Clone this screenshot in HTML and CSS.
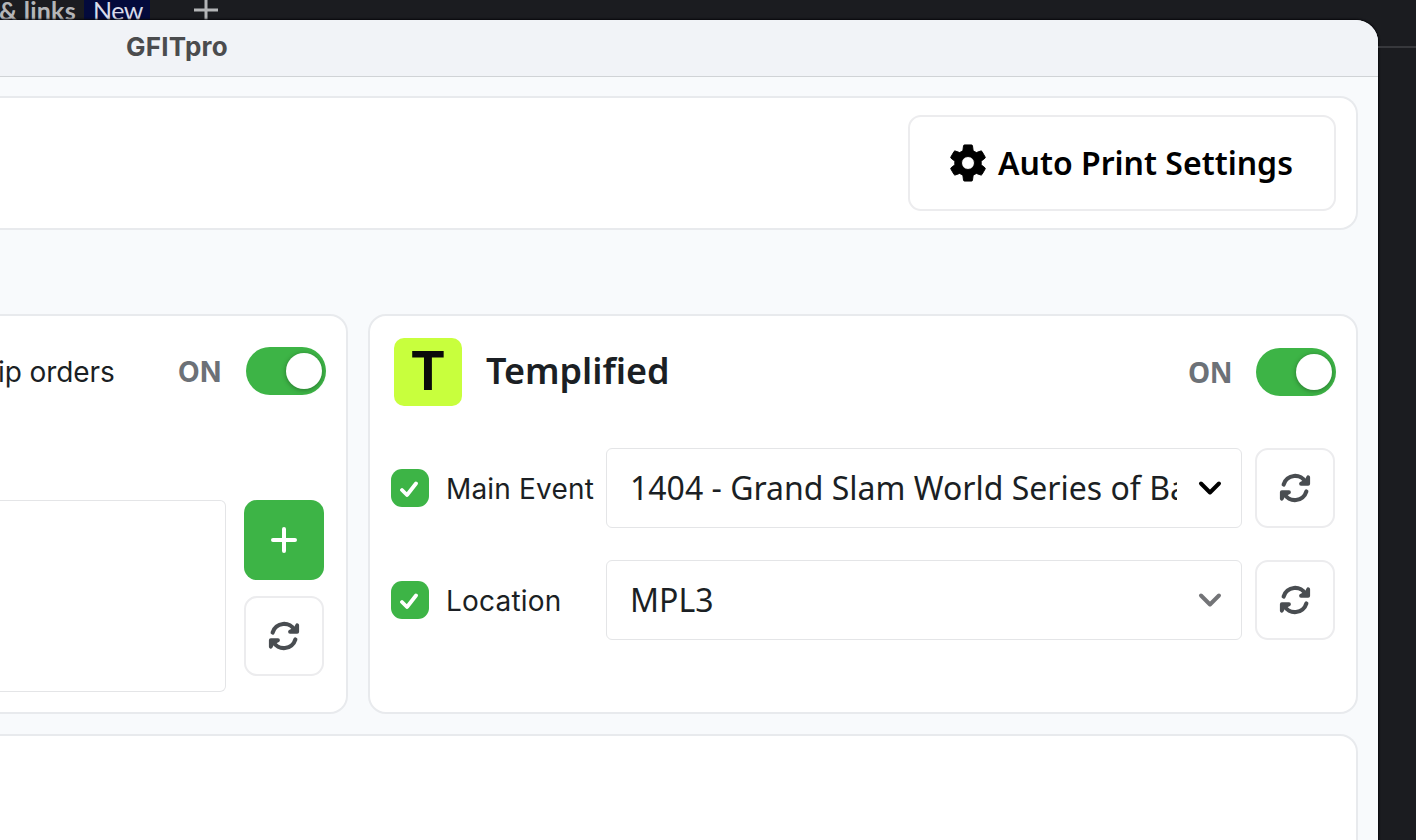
FILE: index.html
```html
<!DOCTYPE html>
<html lang="en">
<head>
<meta charset="utf-8">
<title>GFITpro</title>
<link rel="stylesheet" href="styles.css">
</head>
<body>
<svg class="defs" aria-hidden="true">
  <symbol id="refresh" viewBox="-16 -16 32 32">
    <g id="half">
      <path d="M-11.4 -3.4A12 12 0 0 1 10.8 -5.6" fill="none" stroke="currentColor" stroke-width="4.1" stroke-linecap="round"/>
      <path d="M13.2 -10.8V-4.2H6L11.4 -7Z" fill="currentColor" stroke="currentColor" stroke-width="3.8" stroke-linecap="round" stroke-linejoin="round"/>
    </g>
    <use href="#half" transform="rotate(180)"/>
  </symbol>
</svg>
<div class="tabs"><span class="tab-label">&amp; links</span><span class="tag">New</span>
  <svg class="tab-plus" viewBox="0 0 24 20"><path d="M0 10H24M12 0V20" stroke="#b4b5b7" stroke-width="3"/></svg>
</div>
<div class="desk">
  <main class="window">
    <header class="titlebar"><span>GFITpro</span></header>
    <section class="card toolbar">
      <button class="settings">
        <svg viewBox="2 2 20 20"><path fill-rule="evenodd" stroke="#000" stroke-width=".5" stroke-linejoin="round" d="M18.9 12.94c.04-.3.06-.61.06-.94 0-.32-.02-.64-.07-.94l2.03-1.58c.18-.14.23-.41.12-.61l-1.72-2.98c-.12-.22-.37-.29-.59-.22l-2.39.86c-.5-.38-1.03-.7-1.62-.94l-.36-2.7c-.04-.24-.24-.41-.48-.41h-3.76c-.24 0-.43.17-.47.41l-.36 2.7c-.59.24-1.13.57-1.62.94l-2.39-.86c-.22-.08-.47 0-.59.22L2.96 8.87c-.12.21-.08.47.12.61l2.03 1.58c-.05.3-.07.63-.07.94s.02.64.07.94l-2.03 1.58c-.18.14-.23.41-.12.61l1.73 2.98c.12.22.37.29.59.22l2.39-.86c.5.38 1.03.7 1.62.94l.36 2.7c.05.24.24.41.48.41h3.76c.24 0 .44-.17.47-.41l.36-2.7c.59-.24 1.13-.56 1.62-.94l2.39.86c.22.08.47 0 .59-.22l1.72-2.98c.12-.22.07-.47-.12-.61l-2.01-1.58zM12 15.4a3.4 3.4 0 1 1 0-6.8 3.4 3.4 0 0 1 0 6.8z"/></svg>
        <span>Auto Print Settings</span>
      </button>
    </section>
    <div class="columns">
      <section class="card orders">
        <div class="orders-head"><span class="label orders-label">ip orders</span><span class="on on-sans">ON</span><span class="switch"></span></div>
        <div class="orders-body">
          <div class="listbox"></div>
          <div class="actions">
            <button class="icon-btn add"><svg viewBox="0 0 26 26"><path d="M13 2V24M2 13H24" stroke="#fff" stroke-width="4" stroke-linecap="round"/></svg></button>
            <button class="icon-btn"><svg class="sync"><use href="#refresh"/></svg></button>
          </div>
        </div>
      </section>
      <section class="card event">
        <div class="event-head"><span class="logo">T</span><h2>Templified</h2><span class="on on-noto">ON</span><span class="switch"></span></div>
        <div class="field">
          <span class="check"><svg viewBox="0 0 18 16"><path d="M2 9L7 14L16 2.5" fill="none" stroke="#fff" stroke-width="3.8" stroke-linecap="round" stroke-linejoin="round"/></svg></span>
          <span class="label main-label">Main Event</span>
          <div class="select"><span class="value">1404 - Grand Slam World Series of Ba</span><svg class="chevron" viewBox="0 0 24 16"><path d="M3 3.5L12 12.5L21 3.5"/></svg></div>
          <button class="icon-btn"><svg class="sync"><use href="#refresh"/></svg></button>
        </div>
        <div class="field">
          <span class="check"><svg viewBox="0 0 18 16"><path d="M2 9L7 14L16 2.5" fill="none" stroke="#fff" stroke-width="3.8" stroke-linecap="round" stroke-linejoin="round"/></svg></span>
          <span class="label loc-label">Location</span>
          <div class="select"><span class="value">MPL3</span><svg class="chevron muted" viewBox="0 0 24 16"><path d="M3 3.5L12 12.5L21 3.5"/></svg></div>
          <button class="icon-btn"><svg class="sync"><use href="#refresh"/></svg></button>
        </div>
      </section>
    </div>
    <section class="card bottom"></section>
  </main>
  <div class="rail"></div>
</div>
</body>
</html>
```
FILE: styles.css
```css
* { box-sizing: border-box; }
body { margin: 0; width: 1416px; height: 840px; overflow: hidden; background: #1b1c20; font-family: "Noto Sans", sans-serif; color: #1b1f24; }
button { font: inherit; color: inherit; padding: 0; }
.defs { position: absolute; width: 0; height: 0; }
.tabs { height: 20px; display: flex; overflow: hidden; font: 25px/20px Lato, sans-serif; color: #b4b5b7; white-space: nowrap; }
.tab-label { width: 84px; font-weight: 700; letter-spacing: .25px; text-indent: -1px; }
.tag { width: 66px; height: 20px; padding-left: 9px; background: #030a3c; color: #d9dcea; letter-spacing: -.5px; }
.tab-plus { width: 24px; height: 20px; margin-left: 44px; }
.desk { display: flex; height: 820px; }
.window { width: 1378px; height: 820px; border-radius: 0 22px 0 0; background: #f8fafc; overflow: hidden; box-shadow: 0 0 2px 1px #08080c; }
.rail { flex: 1; height: 28px; border-bottom: 2px solid #37383c; }
.titlebar { height: 57px; background: #f1f3f7; border-bottom: 1px solid #d0d3d6; padding-left: 126px; font: 700 26px/54px Inter, sans-serif; letter-spacing: .25px; color: #4b4c4e; }
.card { background: #fff; border: 2px solid #e8eaed; border-radius: 18px; }
.toolbar { width: 1358px; height: 134px; margin-top: 19px; border-left: 0; border-radius: 0 18px 18px 0; display: flex; justify-content: flex-end; padding: 17px 20px; }
.settings { width: 428px; height: 96px; background: #fff; border: 2px solid #ececee; border-radius: 13px; display: flex; align-items: center; padding-left: 39px; font-size: 32px; font-weight: 600; color: #000; white-space: nowrap; }
.settings svg { width: 38px; height: 38px; margin-right: 11px; }
.settings span { padding-bottom: 2px; }
.columns { display: flex; gap: 20px; width: 1358px; height: 400px; margin: 84px 0 20px; }
.orders { width: 348px; border-left: 0; border-radius: 0 18px 18px 0; }
.orders-head { display: flex; align-items: center; height: 110px; padding-right: 20px; }
.label { font: 28px/40px Inter, sans-serif; white-space: nowrap; padding-top: 1px; }
.orders-label { width: 178px; text-indent: -2px; letter-spacing: -.1px; }
.main-label { letter-spacing: .17px; }
.loc-label { letter-spacing: .2px; }
.on { width: 68px; font-size: 28px; font-weight: 600; color: #6c7177; }
.on-sans { font-family: Inter, sans-serif; font-weight: 700; letter-spacing: .4px; padding-top: 1px; }
.on-noto { font-weight: 700; letter-spacing: -.3px; padding-bottom: 1px; }
.switch { width: 80px; height: 48px; border-radius: 24px; background: #3db446; display: flex; justify-content: flex-end; padding: 6px 4px; }
.switch::after { content: ""; width: 36px; height: 36px; border-radius: 50%; background: #fff; box-shadow: 0 1px 5px rgba(0,0,0,.35); }
.orders-body { display: flex; gap: 18px; margin-top: 74px; }
.listbox { width: 226px; height: 192px; border: 1px solid #e4e5e7; border-left: 0; border-radius: 0 6px 6px 0; }
.actions { display: flex; flex-direction: column; gap: 16px; }
.icon-btn { width: 80px; height: 80px; background: #fff; border: 2px solid #ececee; border-radius: 13px; display: flex; align-items: center; justify-content: center; color: #494d51; }
.icon-btn.add { background: #3db446; border: 0; }
.add svg { width: 26px; height: 26px; }
.sync { width: 32px; height: 32px; }
.event { width: 990px; padding-left: 21px; }
.event-head { display: flex; align-items: center; height: 112px; padding: 0 20px 0 3px; }
.logo { width: 68px; height: 68px; border-radius: 10px; background: #c8ff3d; color: #0a0a0a; font: 700 53px/66px Inter, sans-serif; text-align: center; }
h2 { margin: 0 0 0 24px; padding-bottom: 3px; font-size: 36px; font-weight: 600; flex: 1; }
.field { display: flex; align-items: center; height: 80px; margin: 20px 0 32px; }
.field + .field { margin-top: 0; }
.check { width: 38px; height: 38px; border-radius: 11px; background: #3db446; display: flex; align-items: center; justify-content: center; }
.check svg { width: 18px; height: 16px; margin-top: 2px; margin-right: 2px; }
.field .label { width: 160px; margin-left: 17px; }
.select { width: 636px; height: 80px; margin-right: 13px; border: 1px solid #e4e5e7; border-radius: 6px; display: flex; align-items: center; padding: 0 19px 0 23px; }
.value { width: 548px; margin-right: 21px; padding-bottom: 1px; overflow: hidden; white-space: nowrap; font-size: 32px; }
.chevron { width: 24px; height: 16px; fill: none; stroke: #000; stroke-width: 4; stroke-linecap: round; stroke-linejoin: round; }
.chevron.muted { stroke: #737477; }
.bottom { width: 1358px; height: 130px; border-left: 0; border-radius: 0 18px 0 0; }
```
